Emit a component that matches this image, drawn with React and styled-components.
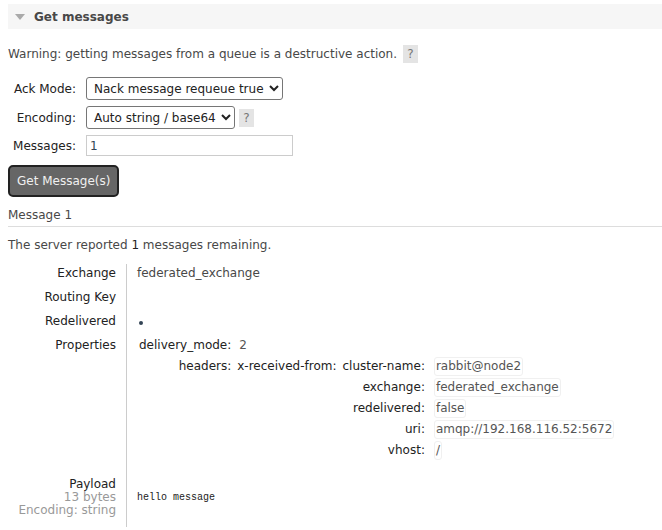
import React from 'react';
import styled, { createGlobalStyle } from 'styled-components';

const GlobalStyle = createGlobalStyle`
    body {
        margin: 0;
        background: #fff;
        font-family: "DejaVu Sans", Verdana, sans-serif;
        font-size: 12px;
        color: #484848;
    }
`;

const Page = styled.div`
    padding: 4px 0 0 8px;
    width: 654px;
    overflow: hidden;
`;

const SectionHeader = styled.div`
    display: flex;
    align-items: center;
    gap: 9px;
    height: 25px;
    padding-left: 7px;
    background: #f6f6f6;
    font-weight: bold;
    font-size: 12px;
    color: #484848;
`;

const Triangle = styled.span`
    width: 0;
    height: 0;
    border-left: 5px solid transparent;
    border-right: 5px solid transparent;
    border-top: 6px solid #aaa;
`;

const Warning = styled.p`
    margin: 16px 0 14px;
    display: flex;
    align-items: center;
    gap: 6px;
`;

const Help = styled.span`
    display: inline-flex;
    align-items: center;
    justify-content: center;
    width: 15px;
    height: 18px;
    background: #e4e4e4;
    color: #777;
    font-size: 12px;
`;

const Form = styled.div`
    display: grid;
    grid-template-columns: 78px auto;
    row-gap: 6px;
    align-items: center;
    justify-items: start;
`;

const FormLabel = styled.label`
    justify-self: end;
    padding-right: 10px;
    color: #222;
`;

const FieldRow = styled.div`
    display: flex;
    align-items: center;
    gap: 4px;
`;

const Select = styled.select`
    height: 23px;
    padding: 0 2px 0 3px;
    font-family: "DejaVu Sans", Verdana, sans-serif;
    font-size: 12px;
    color: #222;
    border: 1px solid #767676;
    border-radius: 3px;
    background: #fff;
`;

const TextInput = styled.input`
    width: 207px;
    height: 21px;
    box-sizing: border-box;
    padding: 0 3px;
    border: 1px solid #ccc;
    font-family: "DejaVu Sans", Verdana, sans-serif;
    font-size: 12px;
    color: #345;
`;

const Button = styled.button`
    margin-top: 9px;
    height: 32px;
    padding: 0 7px;
    background: #666;
    color: #f0f0f0;
    border: 2px solid #222;
    border-radius: 5px;
    font-family: "DejaVu Sans", Verdana, sans-serif;
    font-size: 12px;
`;

const MessageTitle = styled.div`
    margin-top: 11px;
    padding-bottom: 4px;
    border-bottom: 1px solid #ddd;
`;

const Remaining = styled.p`
    margin: 11px 0 12px;
    b {
        font-weight: normal;
        color: #222;
    }
`;

const Details = styled.div`
    display: grid;
    grid-template-columns: 118px 1fr;
`;

const Key = styled.div`
    text-align: right;
    padding: ${p => p.$pad || '0 10px 6px 0'};
    color: #222;
    line-height: ${p => p.$lh || '18px'};
`;

const Val = styled.div`
    border-left: 1px solid #ccc;
    padding: ${p => p.$pad || '0 0 6px 10px'};
    line-height: 18px;
    display: flex;
    align-items: ${p => p.$center ? 'center' : 'flex-start'};
`;

const Sub = styled.div`
    color: #999;
    line-height: 13px;
`;

const Dot = styled.span`
    width: 4px;
    height: 4px;
    border-radius: 50%;
    background: #345;
    margin: 9px 0 0 2px;
`;

const Props = styled.div`
    display: grid;
    grid-template-columns: auto auto;
    column-gap: ${p => p.$gap || '6px'};
    row-gap: 2px;
    align-items: start;
    justify-content: start;
`;

const PropKey = styled.div`
    text-align: right;
    color: #222;
    line-height: 18px;
`;

const PropVal = styled.div`
    justify-self: start;
    padding: 0 1px;
    line-height: 17px;
    color: #555;
    border: 1px solid ${p => p.$plain ? 'transparent' : '#f0f0f0'};
    border-radius: 3px;
`;

const Mono = styled.pre`
    margin: 0;
    font-family: "Liberation Mono", monospace;
    font-size: 10px;
    color: #222;
`;

const headers = [
    ['cluster-name', 'rabbit@node2'],
    ['exchange', 'federated_exchange'],
    ['redelivered', 'false'],
    ['uri', 'amqp://192.168.116.52:5672'],
    ['vhost', '/'],
];

const App = () => (
    <Page>
        <GlobalStyle />
        <SectionHeader>
            <Triangle />
            Get messages
        </SectionHeader>

        <Warning>
            Warning: getting messages from a queue is a destructive action.
            <Help>?</Help>
        </Warning>

        <Form>
            <FormLabel>Ack Mode:</FormLabel>
            <Select defaultValue="requeue">
                <option value="requeue">Nack message requeue true</option>
            </Select>
            <FormLabel>Encoding:</FormLabel>
            <FieldRow>
                <Select defaultValue="auto">
                    <option value="auto">Auto string / base64</option>
                </Select>
                <Help>?</Help>
            </FieldRow>
            <FormLabel>Messages:</FormLabel>
            <TextInput defaultValue="1" />
        </Form>

        <Button>Get Message(s)</Button>

        <MessageTitle>Message 1</MessageTitle>
        <Remaining>The server reported <b>1</b> messages remaining.</Remaining>

        <Details>
            <Key>Exchange</Key>
            <Val>federated_exchange</Val>
            <Key>Routing Key</Key>
            <Val />
            <Key>Redelivered</Key>
            <Val><Dot /></Val>
            <Key>Properties</Key>
            <Val $pad="0 0 18px 12px">
                <Props>
                    <PropKey>delivery_mode:</PropKey>
                    <PropVal $plain>2</PropVal>
                    <PropKey>headers:</PropKey>
                    <Props>
                        <PropKey>x-received-from:</PropKey>
                        <Props $gap="9px">
                            {headers.map(([k, v]) => (
                                <React.Fragment key={k}>
                                    <PropKey>{k}:</PropKey>
                                    <PropVal>{v}</PropVal>
                                </React.Fragment>
                            ))}
                        </Props>
                    </Props>
                </Props>
            </Val>
            <Key $lh="13px" $pad="0 10px 10px 0">
                Payload
                <Sub>13 bytes</Sub>
                <Sub>Encoding: string</Sub>
            </Key>
            <Val $center $pad="0 0 10px 10px">
                <Mono>hello message</Mono>
            </Val>
        </Details>
    </Page>
);

export default App;
